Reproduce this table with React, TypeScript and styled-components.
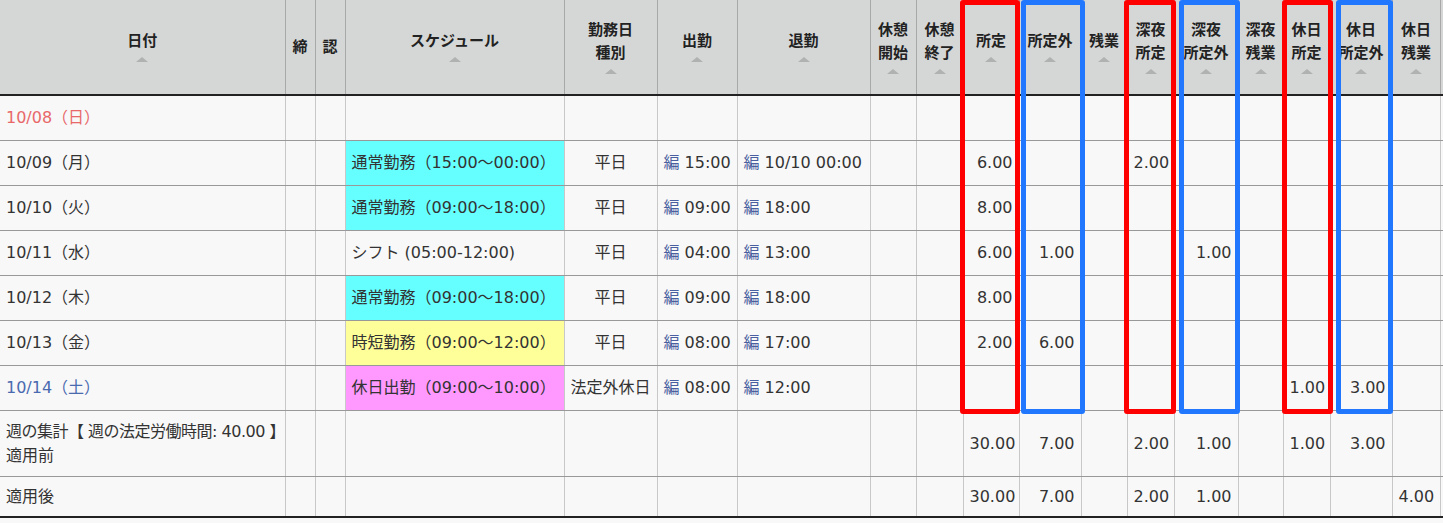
import React from 'react';
import styled, { createGlobalStyle } from 'styled-components';

const GlobalStyle = createGlobalStyle`
  html, body {
    margin: 0;
    padding: 0;
    background: #f8f8f8;
    overflow: hidden;
  }
  body {
    font-family: "DejaVu Sans", "Noto Sans CJK JP", sans-serif;
    color: #333;
  }
`;

type Day = 'sun' | 'sat' | 'normal';
type Shift = 'cyan' | 'yellow' | 'pink' | 'none';

interface Row {
  date: string;
  day: Day;
  schedule?: string;
  shift: Shift;
  kind?: string;
  start?: string;
  end?: string;
  values: (string | null)[];
}

const COLS = [285, 30, 30, 219, 93, 80, 133, 46, 47, 56, 62, 46, 47, 64, 45, 47, 62, 48, 60];

const HEADERS: { label: React.ReactNode; sort: boolean }[] = [
  { label: '日付', sort: true },
  { label: '締', sort: false },
  { label: '認', sort: false },
  { label: 'スケジュール', sort: true },
  { label: <>勤務日<br />種別</>, sort: true },
  { label: '出勤', sort: true },
  { label: '退勤', sort: true },
  { label: <>休憩<br />開始</>, sort: true },
  { label: <>休憩<br />終了</>, sort: true },
  { label: '所定', sort: true },
  { label: '所定外', sort: true },
  { label: '残業', sort: true },
  { label: <>深夜<br />所定</>, sort: true },
  { label: <>深夜<br />所定外</>, sort: true },
  { label: <>深夜<br />残業</>, sort: true },
  { label: <>休日<br />所定</>, sort: true },
  { label: <>休日<br />所定外</>, sort: true },
  { label: <>休日<br />残業</>, sort: true },
  { label: '', sort: false },
];

const n = null;

const ROWS: Row[] = [
  { date: '10/08（日）', day: 'sun', shift: 'none', values: [n, n, n, n, n, n, n, n, n] },
  {
    date: '10/09（月）', day: 'normal', schedule: '通常勤務（15:00～00:00）', shift: 'cyan',
    kind: '平日', start: '15:00', end: '10/10 00:00',
    values: ['6.00', n, n, '2.00', n, n, n, n, n],
  },
  {
    date: '10/10（火）', day: 'normal', schedule: '通常勤務（09:00～18:00）', shift: 'cyan',
    kind: '平日', start: '09:00', end: '18:00',
    values: ['8.00', n, n, n, n, n, n, n, n],
  },
  {
    date: '10/11（水）', day: 'normal', schedule: 'シフト (05:00-12:00)', shift: 'none',
    kind: '平日', start: '04:00', end: '13:00',
    values: ['6.00', '1.00', n, n, '1.00', n, n, n, n],
  },
  {
    date: '10/12（木）', day: 'normal', schedule: '通常勤務（09:00～18:00）', shift: 'cyan',
    kind: '平日', start: '09:00', end: '18:00',
    values: ['8.00', n, n, n, n, n, n, n, n],
  },
  {
    date: '10/13（金）', day: 'normal', schedule: '時短勤務（09:00～12:00）', shift: 'yellow',
    kind: '平日', start: '08:00', end: '17:00',
    values: ['2.00', '6.00', n, n, n, n, n, n, n],
  },
  {
    date: '10/14（土）', day: 'sat', schedule: '休日出勤（09:00～10:00）', shift: 'pink',
    kind: '法定外休日', start: '08:00', end: '12:00',
    values: [n, n, n, n, n, n, '1.00', '3.00', n],
  },
];

const SUMMARY_BEFORE = ['30.00', '7.00', n, '2.00', '1.00', n, '1.00', '3.00', n];
const SUMMARY_AFTER = ['30.00', '7.00', n, '2.00', '1.00', n, n, n, '4.00'];

// annotation frames drawn over the table: [left, width, colour]
const FRAMES: [number, number, 'red' | 'blue'][] = [
  [960, 60, 'red'],
  [1021, 64, 'blue'],
  [1124, 52, 'red'],
  [1179, 61, 'blue'],
  [1282, 51, 'red'],
  [1336, 57, 'blue'],
];

const SHIFT_BG: Record<Shift, string> = {
  cyan: '#66ffff',
  yellow: '#ffff99',
  pink: '#ff99ff',
  none: 'transparent',
};

const DAY_COLOR: Record<Day, string> = {
  sun: '#e8686a',
  sat: '#4a6ab0',
  normal: '#333',
};

export default function App() {
  return (
    <>
      <GlobalStyle />
      <Wrap>
        <Table>
          <colgroup>
            {COLS.map((w, i) => (
              <col key={i} style={{ width: w }} />
            ))}
          </colgroup>
          <thead>
            <tr>
              {HEADERS.map((h, i) => (
                <Th key={i}>
                  <HeadLabel>{h.label}</HeadLabel>
                  {h.sort && <SortMark />}
                </Th>
              ))}
            </tr>
          </thead>
          <tbody>
            {ROWS.map((r) => (
              <tr key={r.date}>
                <Td $color={DAY_COLOR[r.day]}>{r.date}</Td>
                <Td />
                <Td />
                <ScheduleTd $shift={r.shift}>{r.schedule}</ScheduleTd>
                <Td $align="center">{r.kind}</Td>
                <Td>{r.start && <><Edit>編</Edit> {r.start}</>}</Td>
                <Td>{r.end && <><Edit>編</Edit> {r.end}</>}</Td>
                <Td />
                <Td />
                {r.values.map((v, i) => (
                  <Td key={i} $align="right">{v}</Td>
                ))}
                <Td />
              </tr>
            ))}
            <SummaryRow>
              <Td>
                <Tight>週の集計【 週の法定労働時間: 40.00 】</Tight>
                <br />
                適用前
              </Td>
              <Td />
              <Td />
              <Td />
              <Td />
              <Td />
              <Td />
              <Td />
              <Td />
              {SUMMARY_BEFORE.map((v, i) => (
                <Td key={i} $align="right">{v}</Td>
              ))}
              <Td />
            </SummaryRow>
            <LastRow>
              <Td>適用後</Td>
              <Td />
              <Td />
              <Td />
              <Td />
              <Td />
              <Td />
              <Td />
              <Td />
              {SUMMARY_AFTER.map((v, i) => (
                <Td key={i} $align="right">{v}</Td>
              ))}
              <Td />
            </LastRow>
          </tbody>
        </Table>
        {FRAMES.map(([left, width, color]) => (
          <Frame key={left} $color={color} style={{ left, width }} />
        ))}
      </Wrap>
    </>
  );
}

const Wrap = styled.div`
  position: relative;
  width: 1500px;
`;

const Table = styled.table`
  border-collapse: collapse;
  table-layout: fixed;
  width: 1500px;
  font-size: 16px;
  border-bottom: 2px solid #222;
`;

const Th = styled.th`
  height: 94px;
  padding: 0 2px;
  background: #d5d7d7;
  border-left: 1px solid #a8a8a8;
  border-bottom: 2px solid #222;
  color: #222;
  font-size: 15px;
  font-weight: bold;
  text-align: center;
  vertical-align: middle;
  &:first-child {
    border-left: none;
  }
`;

const HeadLabel = styled.div`
  line-height: 23px;
  white-space: nowrap;
`;

const SortMark = styled.div`
  width: 0;
  height: 0;
  margin: 4px auto 2px;
  border-left: 6px solid transparent;
  border-right: 6px solid transparent;
  border-bottom: 5px solid #b0b2b2;
`;

const Td = styled.td<{ $align?: 'left' | 'center' | 'right'; $color?: string }>`
  height: 44px;
  padding: 0 6px;
  border-left: 1px solid #c8c8c8;
  border-bottom: 1px solid #999;
  text-align: ${(p) => p.$align ?? 'left'};
  color: ${(p) => p.$color ?? '#333'};
  vertical-align: middle;
  white-space: nowrap;
  overflow: hidden;
  line-height: 24px;
  &:first-child {
    border-left: none;
  }
`;

const Tight = styled.span`
  letter-spacing: -0.5px;
`;

const ScheduleTd = styled(Td)<{ $shift: Shift }>`
  background: ${(p) => SHIFT_BG[p.$shift]};
`;

const Edit = styled.span`
  color: #4a5fa0;
`;

const SummaryRow = styled.tr`
  & > td {
    height: 65px;
  }
`;

const LastRow = styled.tr`
  & > td {
    height: 39px;
    border-bottom: none;
  }
`;

const Frame = styled.div<{ $color: 'red' | 'blue' }>`
  position: absolute;
  top: 0;
  height: 414px;
  box-sizing: border-box;
  border: 5px solid ${(p) => (p.$color === 'red' ? '#ff0000' : '#2178ff')};
  border-radius: 3px;
  pointer-events: none;
`;
